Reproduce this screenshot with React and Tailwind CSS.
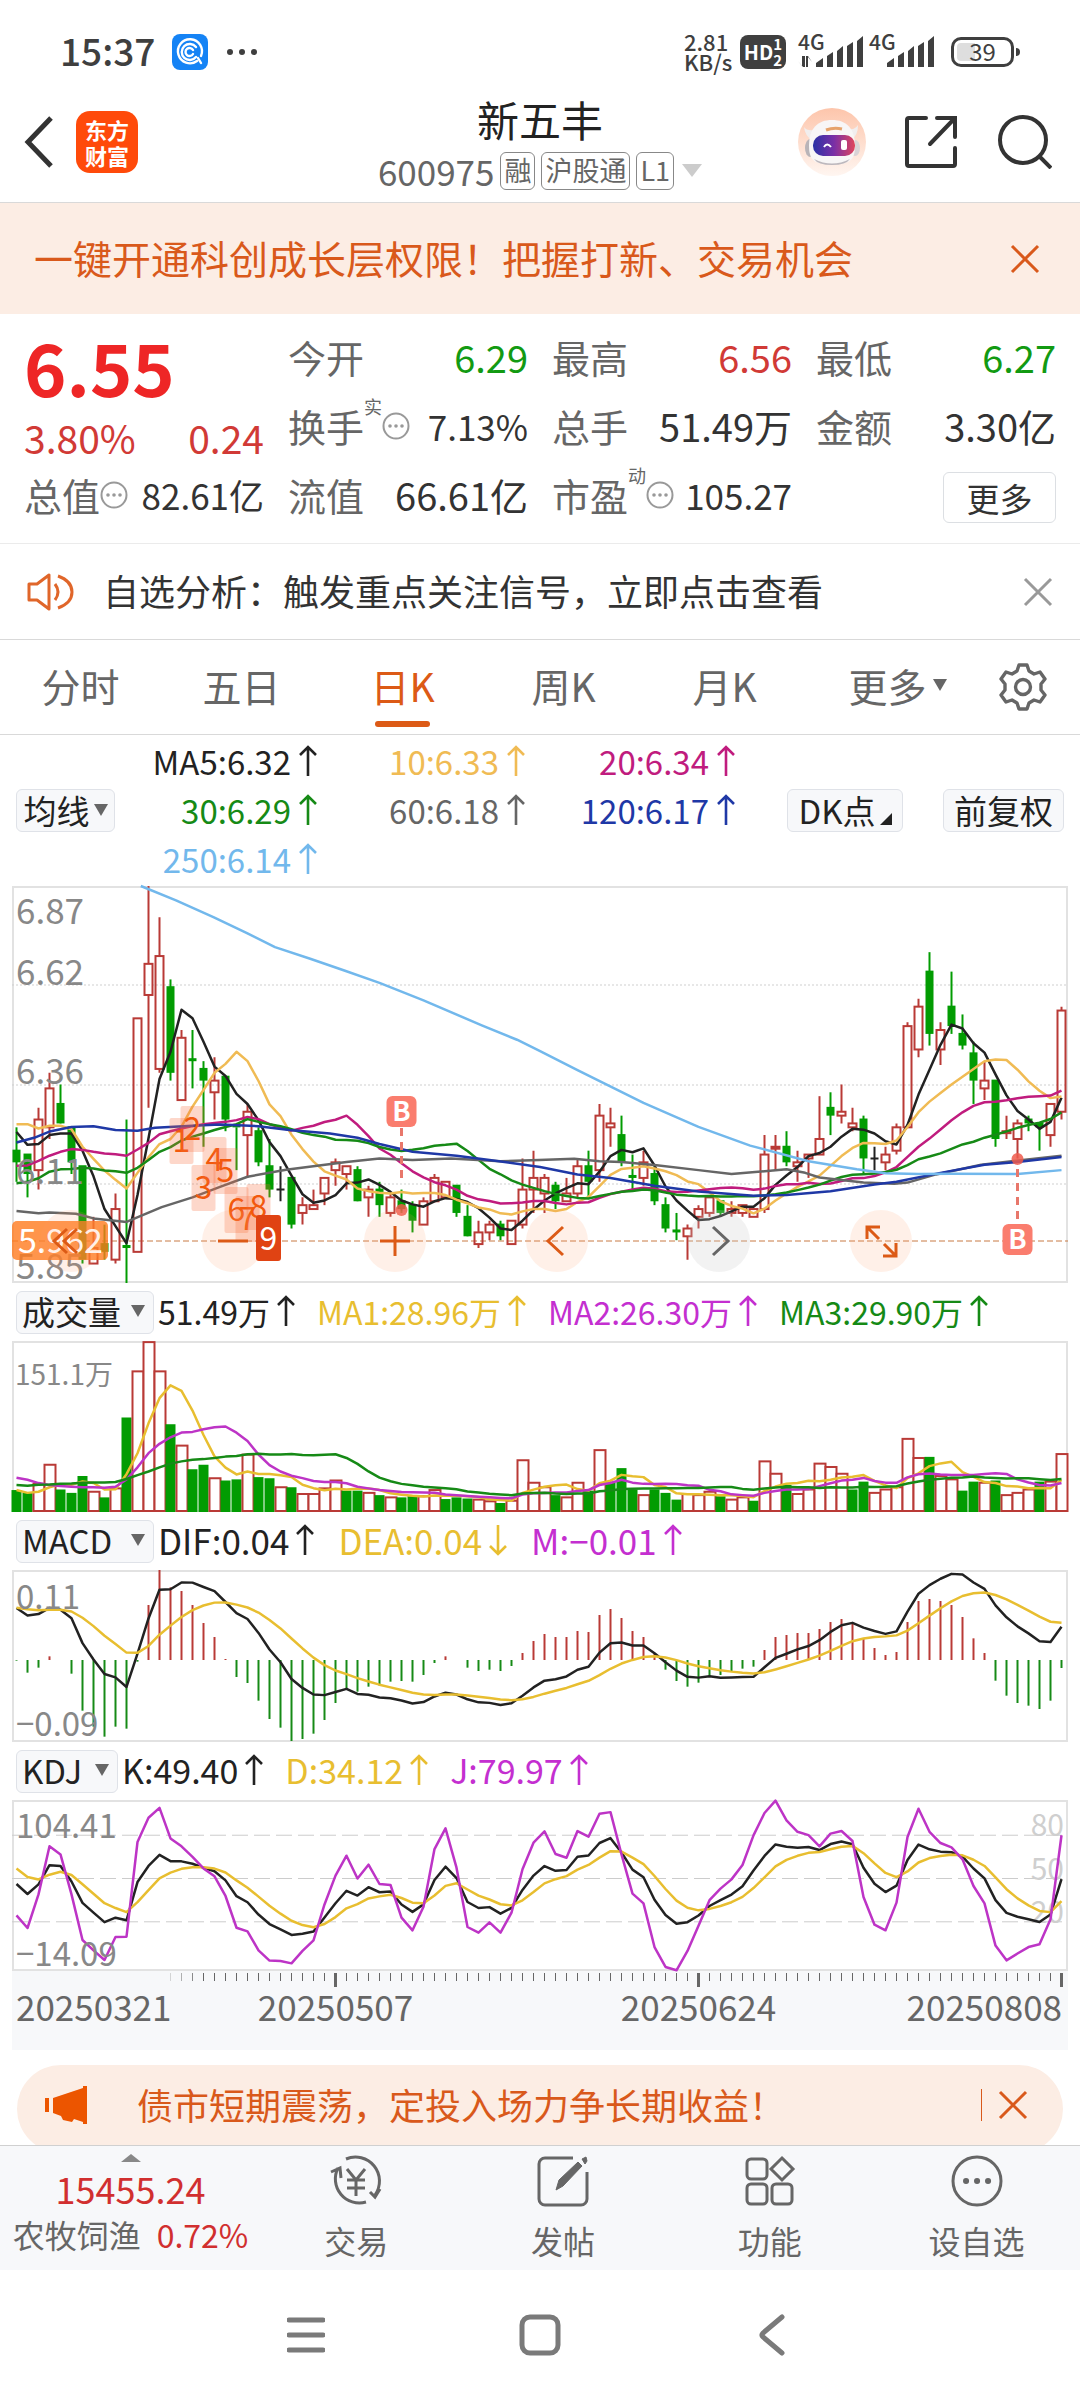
import React from 'react';

const RED = '#b93a36';
const GREEN = '#029c02';
const STEP = 11;
const WIDTH = 1056;

const xAt = (i) => 4.5 + STEP * i;

// open, close, high, low
const candles = [
  [6.19, 6.16, 6.25, 6.11], [6.18, 6.13, 6.18, 6.07], [6.14, 6.27, 6.3, 6.09], [6.25, 6.35, 6.39, 6.22],
  [6.31, 6.26, 6.36, 6.26], [6.25, 6.16, 6.25, 6.13], [6.15, 5.91, 6.15, 5.9], [5.9, 5.94, 6.02, 5.9],
  [5.95, 5.93, 6.0, 5.91], [5.91, 6.04, 6.08, 5.9], [5.945, 5.94, 6.27, 5.85], [5.93, 6.53, 6.53, 5.93],
  [6.59, 6.67, 6.87, 6.3], [6.4, 6.69, 6.79, 6.39], [6.61, 6.39, 6.63, 6.37], [6.32, 6.48, 6.5, 6.32],
  [6.425, 6.42, 6.5, 6.35], [6.4, 6.37, 6.42, 6.2], [6.34, 6.37, 6.43, 6.27], [6.38, 6.27, 6.38, 6.24],
  [6.255, 6.25, 6.25, 6.14], [6.23, 6.29, 6.31, 6.12], [6.24, 6.16, 6.25, 6.15], [6.15, 6.09, 6.22, 6.07],
  [6.09, 6.09, 6.15, 6.06], [6.12, 6.0, 6.12, 5.99], [6.03, 6.05, 6.07, 6.0], [6.04, 6.05, 6.09, 6.04],
  [6.08, 6.12, 6.12, 6.05], [6.14, 6.16, 6.17, 6.1], [6.13, 6.15, 6.15, 6.09], [6.14, 6.06, 6.15, 6.06],
  [6.07, 6.09, 6.1, 6.02], [6.09, 6.05, 6.11, 6.02], [6.03, 6.07, 6.08, 6.02], [6.06, 6.04, 6.09, 6.03],
  [6.05, 6.01, 6.06, 5.98], [6.0, 6.06, 6.07, 6.0], [6.06, 6.12, 6.13, 6.06], [6.07, 6.11, 6.11, 6.07],
  [6.1, 6.03, 6.1, 6.02], [6.02, 5.97, 6.05, 5.97], [5.95, 5.98, 6.01, 5.94], [5.98, 6.0, 6.01, 5.96],
  [6.0, 5.97, 6.01, 5.96], [5.95, 6.01, 6.01, 5.95], [6.0, 6.09, 6.17, 5.99], [6.09, 6.12, 6.19, 6.03],
  [6.08, 6.12, 6.13, 6.03], [6.1, 6.06, 6.11, 6.04], [6.06, 6.08, 6.12, 6.06], [6.08, 6.15, 6.17, 6.07],
  [6.15, 6.11, 6.19, 6.07], [6.14, 6.28, 6.31, 6.11], [6.25, 6.26, 6.3, 6.2], [6.23, 6.16, 6.28, 6.15],
  [6.125, 6.12, 6.18, 6.09], [6.12, 6.16, 6.19, 6.1], [6.13, 6.06, 6.15, 6.05], [6.05, 5.99, 6.07, 5.98],
  [5.985, 5.98, 6.03, 5.96], [5.97, 5.99, 6.0, 5.91], [6.02, 6.04, 6.05, 5.99], [6.03, 6.07, 6.07, 6.02],
  [6.06, 6.03, 6.06, 6.02], [6.03, 6.04, 6.06, 6.02], [6.03, 6.05, 6.05, 6.02], [6.02, 6.04, 6.04, 6.02],
  [6.04, 6.18, 6.23, 6.03], [6.195, 6.2, 6.23, 6.14], [6.2, 6.16, 6.24, 6.15], [6.15, 6.16, 6.19, 6.11],
  [6.17, 6.18, 6.18, 6.12], [6.18, 6.22, 6.33, 6.18], [6.3, 6.28, 6.34, 6.23], [6.28, 6.29, 6.36, 6.26],
  [6.25, 6.26, 6.3, 6.24], [6.27, 6.17, 6.28, 6.13], [6.17, 6.17, 6.2, 6.14], [6.16, 6.18, 6.2, 6.14],
  [6.19, 6.25, 6.26, 6.18], [6.25, 6.51, 6.52, 6.25], [6.45, 6.56, 6.58, 6.43], [6.65, 6.49, 6.7, 6.46],
  [6.45, 6.5, 6.52, 6.41], [6.56, 6.51, 6.65, 6.49], [6.49, 6.46, 6.54, 6.45], [6.44, 6.37, 6.47, 6.31],
  [6.35, 6.37, 6.42, 6.32], [6.37, 6.22, 6.37, 6.2], [6.235, 6.24, 6.28, 6.22], [6.22, 6.26, 6.27, 6.17],
  [6.27, 6.26, 6.28, 6.24], [6.26, 6.25, 6.26, 6.19], [6.23, 6.31, 6.31, 6.2], [6.29, 6.55, 6.56, 6.27],
];

const volumes = [
  19.5, 17, 25, 42, 20, 17, 32, 18, 13, 21, 84, 125, 151, 125, 78, 59, 38, 42, 30, 28, 29, 51, 31, 30,
  22, 22, 16, 16, 21, 28, 19, 19, 17, 15, 13, 13, 14, 14, 19.5, 11.5, 13, 12, 11, 9.5, 8, 10, 46, 26,
  22, 15, 13, 26, 19, 55, 26, 39, 20, 15, 20, 17, 11, 16, 15, 18, 14, 11, 13, 10, 45, 34, 24, 16,
  20, 43, 40, 34, 20, 27, 17, 20, 22, 65, 48, 49, 32, 29, 19, 27, 26, 28, 15, 17, 20, 27, 27, 51.5,
];

const macd = [
  -2, -38, -23, 11, 0, -41, -152, -200, -230, -200, -206, -5, 165, 270, 218, 207, 165, 111, 69, 3, -51, -69, -122, -177,
  -203, -243, -237, -221, -180, -129, -88, -95, -80, -77, -65, -63, -65, -45, -9, 11, 0, -23, -33, -29, -33, -18, 21, 57,
  78, 69, 69, 87, 84, 135, 153, 126, 87, 69, 18, -29, -63, -80, -68, -48, -45, -35, -26, -20, 30, 69, 75, 81,
  81, 93, 114, 123, 110, 65, 36, 15, 24, 114, 177, 183, 177, 165, 129, 65, 21, -62, -107, -129, -137, -147, -122, -24,
];

const kdjJ = [
  24.5, 15.7, 39, 72.3, 66.7, 39, 7.4, 0.2, -6.5, 9.5, 9.7, 75.3, 92.1, 99, 77.8, 72.3, 65, 57, 51.5, 37.9, 15.9, 13.4, 0.2, -6.9,
  -7.2, -8.8, -0.2, 7.2, 32, 52, 65.8, 50, 59.6, 46.2, 45.5, 22.9, 14.1, 30.5, 70.4, 84.8, 57.5, 16.4, 12.5, 19.6, 12.5, 26.3, 56.4, 74.8,
  82.7, 67, 64.4, 82.9, 79, 94.9, 96, 66.7, 39.5, 32.8, 2.5, -11.3, -13.6, -0.2, 17.3, 35, 43, 49.4, 59.4, 79.9, 95.4, 104, 90.3, 82.4,
  80.1, 72.3, 81.1, 82.9, 76, 37.2, 18, 14.1, 33.3, 78.8, 98.4, 82.4, 74.6, 71.6, 63.3, 44.8, 32.8, 3.5, -6.7, -2, 2.5, 4.4, 21.7, 79.97,
];

// moving average, the first values come from the days before the visible range
const average = (values, n, seed) =>
  values.map((_, i) => {
    if (i < seed.length) return seed[i];
    const part = values.slice(i - n + 1, i + 1);
    return part.reduce((a, b) => a + b, 0) / n;
  });

const closes = candles.map((c) => c[1]);

const ma5 = average(closes, 5, [6.238, 6.205, 6.207, 6.23]);
const ma10 = average(closes, 10, [6.258, 6.258, 6.247, 6.254, 6.254, 6.245, 6.2, 6.169, 6.139]);
const ma20 = average(closes, 20, [
  6.151, 6.152, 6.164, 6.177, 6.187, 6.194, 6.192, 6.187, 6.183, 6.181, 6.177, 6.193, 6.21, 6.232, 6.24, 6.247, 6.253, 6.258, 6.261,
]);
const ma30 = average(closes, 30, [
  6.106, 6.11, 6.119, 6.136, 6.142, 6.143, 6.146, 6.144, 6.139, 6.137, 6.133, 6.146, 6.166, 6.187, 6.199, 6.216, 6.226, 6.234,
  6.243, 6.251, 6.258, 6.271, 6.264, 6.258, 6.253, 6.245, 6.236, 6.23, 6.226,
]);

const ma60 = [
  [0, 6.035], [2, 6.029], [3, 6.031], [5.4, 6.028], [7, 6.016], [10, 6.007], [13.2, 6.045], [16, 6.07], [18.5, 6.097], [21, 6.123],
  [24.5, 6.141], [30, 6.161], [33, 6.17], [36, 6.166], [39.5, 6.17], [44, 6.163], [47.5, 6.166], [50.7, 6.169], [53, 6.163], [55, 6.161],
  [58, 6.153], [62, 6.14], [65, 6.13], [70, 6.142], [71.7, 6.133], [73, 6.121], [77, 6.108], [79.8, 6.105], [81, 6.108], [83.6, 6.129],
  [87.7, 6.154], [95, 6.177],
];
const ma120 = [
  [0, 6.211], [1.6, 6.223], [3, 6.239], [5, 6.251], [7, 6.253], [9, 6.243], [11, 6.241], [12.6, 6.249], [16, 6.254], [18.5, 6.257],
  [22, 6.253], [24.8, 6.243], [28.5, 6.234], [31, 6.223], [33, 6.207], [36, 6.187], [40, 6.177], [43, 6.166], [47.6, 6.148], [51, 6.129],
  [54, 6.12], [58, 6.1], [62, 6.085], [67, 6.074], [70, 6.076], [74, 6.086], [78, 6.103], [80, 6.11], [84, 6.133], [88, 6.154],
  [91.4, 6.162], [95, 6.174],
];
const ma250 = [
  [11.3, 6.87], [14.5, 6.833], [17.9, 6.79], [21, 6.748], [23.5, 6.713], [26.7, 6.683], [29.8, 6.653], [33, 6.621], [37, 6.576],
  [42.3, 6.512], [45.5, 6.475], [47.6, 6.446], [51, 6.397], [57, 6.313], [62, 6.251], [66.7, 6.203], [72, 6.163], [76.4, 6.142],
  [79, 6.132], [82, 6.13], [85, 6.131], [91, 6.13], [95, 6.14],
];

const volMa5 = average(volumes, 5, [19.5, 17, 18, 22]);
const volMa10 = average(volumes, 10, [30.5, 28.7, 25.7, 24, 23, 22.5, 22, 22, 21.6]);
const volMa20 = average(volumes, 20, [
  24, 23.4, 24.2, 24.5, 25.1, 25.4, 26, 26.3, 26.3, 26.6, 29.3, 32.8, 36, 39.6, 43, 45, 46.4, 47, 48,
]);

const dea = [];
macd.forEach((m, i) => dea.push(i === 0 ? 157 : dea[i - 1] + m / 8));
const dif = macd.map((m, i) => dea[i] + m / 2);

const kdjD = [];
kdjJ.forEach((j, i) => kdjD.push(i === 0 ? 57 : (6 * kdjD[i - 1] + j) / 7));
const kdjK = kdjJ.map((j, i) => (j + 2 * kdjD[i]) / 3);

const Line = ({ data, y, color, width = 2.5 }) => {
  const points = data.map((p, i) => (Array.isArray(p) ? `${xAt(p[0])},${y(p[1])}` : `${xAt(i)},${y(p)}`)).join(' ');
  return <polyline points={points} fill="none" stroke={color} strokeWidth={width} strokeLinejoin="round" />;
};

const Frame = ({ height }) => (
  <rect x="1" y="1" width={WIDTH - 2} height={height - 2} fill="none" stroke="#e2e2e2" strokeWidth="2" />
);

const priceY = (p) => ((6.87 - p) / 1.02) * 397;

const signals = [
  ['1', 15, 255], ['2', 16, 243], ['3', 17, 302], ['4', 18, 274], ['5', 19, 285], ['6', 20, 324], ['7', 21, 333], ['8', 22, 321],
];

const BuyMark = ({ i, boxY, dotY }) => {
  const x = xAt(i);
  const up = boxY < dotY;
  return (
    <g>
      <line
        x1={x} x2={x} y1={up ? boxY + 17 : dotY + 10} y2={up ? dotY - 28 : boxY - 16}
        stroke="#e8776b" strokeWidth="3" strokeDasharray="8 6"
      />
      <circle cx={x} cy={dotY} r="6" fill="#ee5a4c" fillOpacity="0.85" />
      <rect x={x - 15} y={boxY - 15} width="30" height="31" rx="6" fill="#fa7d6e" />
      <text x={x} y={boxY + 10} textAnchor="middle" fontSize="27" fontWeight="700" fill="#fff">B</text>
    </g>
  );
};

const PriceChart = () => (
  <svg viewBox="0 0 1056 397" className="block w-full overflow-visible">
    <Frame height={397} />
    {[99, 199, 298].map((y) => (
      <line key={y} x1="0" x2={WIDTH} y1={y} y2={y} stroke="#cfcfcf" strokeDasharray="2 2" />
    ))}
    <line x1="0" x2={WIDTH} y1="355" y2="355" stroke="#c87a45" strokeWidth="1" strokeDasharray="6 3" />
    {candles.map(([open, close, high, low], i) => {
      const x = xAt(i);
      const top = priceY(Math.max(open, close));
      const bottom = priceY(Math.min(open, close));
      if (open === close) {
        return <path key={i} d={`M${x} ${priceY(high)}V${priceY(low)}M${x - 4} ${top}h8`} stroke="#222" strokeWidth="2" />;
      }
      if (close > open) {
        return (
          <g key={i} stroke={RED} strokeWidth="2" fill="none">
            <path d={`M${x} ${priceY(high)}V${top}M${x} ${bottom}V${priceY(low)}`} />
            <rect x={x - 4} y={top} width="8" height={bottom - top} />
          </g>
        );
      }
      return (
        <g key={i}>
          <line x1={x} x2={x} y1={priceY(high)} y2={priceY(low)} stroke={GREEN} strokeWidth="2" />
          <rect x={x - 4} y={top - 1} width="8" height={Math.max(3, bottom - top + 1)} fill={GREEN} />
        </g>
      );
    })}
    <Line data={ma5} y={priceY} color="#222222" />
    <Line data={ma10} y={priceY} color="#f0bb54" />
    <Line data={ma20} y={priceY} color="#c01c7e" />
    <Line data={ma30} y={priceY} color="#168a16" />
    <Line data={ma60} y={priceY} color="#666666" />
    <Line data={ma120} y={priceY} color="#1f38a6" />
    <Line data={ma250} y={priceY} color="#72b8ec" />
    <g fill="#888" fontSize="35">
      <text x="4" y="38">6.87</text>
      <text x="4" y="99">6.62</text>
      <text x="4" y="198">6.36</text>
      <text x="4" y="298">6.11</text>
      <text x="4" y="393">5.85</text>
    </g>
    <rect x="0" y="335" width="96" height="39" rx="5" fill="#ff7a1e" fillOpacity="0.8" />
    <text x="6" y="367" fontSize="34" fill="#fff">5.962</text>
    {signals.map(([n, i, y]) => (
      <g key={n}>
        <rect x={xAt(i) - 12} y={y - 23} width="24" height="46" rx="2" fill="#f76a3c" fillOpacity="0.27" />
        <text x={xAt(i)} y={y + 11} textAnchor="middle" fontSize="32" fill="#f2590d">{n}</text>
      </g>
    ))}
    <BuyMark i={35} boxY={225} dotY={324} />
    <BuyMark i={91} boxY={353} dotY={273} />
  </svg>
);

const volY = (v) => 171 - (v / 151.1) * 170;

const VolumeChart = () => (
  <svg viewBox="0 0 1056 171" className="block w-full overflow-visible">
    <Frame height={171} />
    {volumes.map((v, i) => {
      const up = i > 0 && closes[i] >= closes[i - 1];
      return up ? (
        <rect key={i} x={xAt(i) - 5} y={volY(v)} width="11" height={170 - volY(v)} fill="#fff" stroke={RED} strokeWidth="2" />
      ) : (
        <rect key={i} x={xAt(i) - 5} y={volY(v)} width="10" height={171 - volY(v)} fill={GREEN} />
      );
    })}
    <Line data={volMa5} y={volY} color="#e8be30" />
    <Line data={volMa10} y={volY} color="#bd34c6" />
    <Line data={volMa20} y={volY} color="#168a16" />
    <text x="3" y="44" fontSize="28" fill="#888">151.1万</text>
  </svg>
);

const macdY = (v) => 90 - v / 3;

const MacdChart = () => (
  <svg viewBox="0 0 1056 172" className="block w-full overflow-visible">
    <Frame height={172} />
    {macd.map((m, i) => (
      <line key={i} x1={xAt(i)} x2={xAt(i)} y1="90" y2={macdY(m)} stroke={m > 0 ? RED : '#168a16'} strokeWidth="2" />
    ))}
    <Line data={dif} y={macdY} color="#222" />
    <Line data={dea} y={macdY} color="#e8be30" />
    <g fill="#888" fontSize="33">
      <text x="4" y="39">0.11</text>
      <text x="4" y="166">−0.09</text>
    </g>
  </svg>
);

const kdjY = (v) => (104.41 - v) * 1.443;

const KdjChart = () => (
  <svg viewBox="0 0 1056 171" className="block w-full overflow-visible">
    <Frame height={171} />
    {[80, 50, 20].map((v) => (
      <g key={v}>
        <line x1="0" x2={WIDTH} y1={kdjY(v)} y2={kdjY(v)} stroke="#cccccc" strokeWidth="1" strokeDasharray="16 6" />
        <text x="1052" y={kdjY(v) + 1} textAnchor="end" fontSize="30" fill="#cfcfcf">{v}</text>
      </g>
    ))}
    <Line data={kdjK} y={kdjY} color="#222" />
    <Line data={kdjD} y={kdjY} color="#e8be30" />
    <Line data={kdjJ} y={kdjY} color="#bd34c6" />
    <g fill="#888" fontSize="33">
      <text x="4" y="38">104.41</text>
      <text x="4" y="166">−14.09</text>
    </g>
  </svg>
);

const DateAxis = () => (
  <svg viewBox="0 0 1056 79" className="block w-full bg-[#f7f8fa]">
    {candles.map((_, i) => {
      if (i < 14) return null;
      const major = i === 29 || i === 62 || i === 95;
      return (
        <line
          key={i} x1={xAt(i)} x2={xAt(i)} y1="2" y2={major ? 16 : 10}
          stroke="#666" strokeWidth={major ? 3 : 1} strokeOpacity={i < 17 ? (i - 13) * 0.25 : 1}
        />
      );
    })}
    <g fill="#666" fontSize="35">
      <text x="4" y="50">20250321</text>
      <text x={xAt(29)} y="50" textAnchor="middle">20250507</text>
      <text x={xAt(62)} y="50" textAnchor="middle">20250624</text>
      <text x="1050" y="50" textAnchor="end">20250808</text>
    </g>
  </svg>
);

const Arrow = ({ down }) => (
  <svg viewBox="0 0 18 32" className={`w-[18px] h-8 shrink-0 ${down ? 'rotate-180' : ''}`}>
    <path d="M9 31V2M1 10l8-8 8 8" fill="none" stroke="currentColor" strokeWidth="2.6" />
  </svg>
);

const Caret = () => (
  <svg viewBox="0 0 14 12" className="w-[14px] h-3 shrink-0">
    <path d="M0 0h14L7 12z" fill="#666" />
  </svg>
);

const More = () => (
  <svg viewBox="0 0 28 28" className="w-7 h-7 shrink-0">
    <circle cx="14" cy="14" r="12.5" fill="none" stroke="#999" strokeWidth="2" />
    <circle cx="8" cy="14" r="1.8" fill="#999" />
    <circle cx="14" cy="14" r="1.8" fill="#999" />
    <circle cx="20" cy="14" r="1.8" fill="#999" />
  </svg>
);

const Close = ({ className = '' }) => (
  <svg viewBox="0 0 30 30" className={`w-[30px] h-[30px] shrink-0 ${className}`}>
    <path d="M2 2l26 26M28 2L2 28" fill="none" stroke="currentColor" strokeWidth="3" />
  </svg>
);

const Signal = ({ data }) => (
  <div className="w-[66px] h-9">
    <svg viewBox="0 0 66 36" className="w-full h-full overflow-visible" fill="#3f3f3f">
      <text x="0" y="16" fontSize="21" fontWeight="500">4G</text>
      {data && <path d="M0 27l4 5V22h3v11H5zM14 28l-4-5v10H8V22h2z" />}
      <path d="M18 33v-4l7-5v9zM29 33V22l6-4v15zM39 33V17l6-5v21zM49 33V12l6-4v25zM59 33V7l6-5v31z" />
    </svg>
  </div>
);

const StatusBar = () => (
  <div className="h-[95px] pt-2 pl-[60px] pr-[60px] flex items-center justify-between text-[#3f3f3f]">
    <div className="flex items-center">
      <span className="pb-1 text-[37px] leading-10 font-medium w-[112px]">15:37</span>
      <svg viewBox="0 0 36 36" className="w-9 h-9">
        <rect width="36" height="36" rx="8" fill="#1583f5" />
        <g fill="none" stroke="#fff" strokeWidth="2.4" strokeLinecap="round">
          <path d="M25 27a12 12 0 1 1 4-5M26 24l3 5" />
          <path d="M24 13a8 8 0 1 0 0 10" />
          <path d="M21 16a4 4 0 1 0 0 4" />
        </g>
      </svg>
      <svg viewBox="0 0 32 8" className="w-8 h-2 ml-[18px]" fill="#3f3f3f">
        <circle cx="4" cy="4" r="3" />
        <circle cx="16" cy="4" r="3" />
        <circle cx="28" cy="4" r="3" />
      </svg>
    </div>
    <div className="flex items-center">
      <div className="w-14 pb-[2px] text-[22px] leading-5 font-medium">
        <div>2.81</div>
        <div>KB/s</div>
      </div>
      <div className="w-[46px] h-[34px] rounded-lg bg-[#3f3f3f] text-white flex items-center justify-center">
        <span className="text-[20px] leading-6 font-bold">HD</span>
        <span className="text-[15px] leading-4 font-bold">
          <span className="block">1</span>
          <span className="block">2</span>
        </span>
      </div>
      <div className="flex gap-[5px] ml-3">
        <Signal data />
        <Signal />
      </div>
      <div className="ml-4 w-[63px] h-[30px] border-[3px] border-[#3f3f3f] rounded-[10px] p-[3px]">
        <div className="h-full flex items-center justify-center text-[24px] leading-5 rounded-sm bg-linear-to-r from-[#dedede] from-35% to-white to-35%">
          <span className="pb-[2px]">39</span>
        </div>
      </div>
      <div className="w-1 h-2 ml-[2px] rounded-r bg-[#3f3f3f]" />
    </div>
  </div>
);

const Robot = () => (
  <svg viewBox="0 0 68 68" className="w-[68px] h-[68px]">
    <defs>
      <linearGradient id="halo" x1="0" y1="0" x2="0" y2="1">
        <stop offset="0" stopColor="#fdc5ab" />
        <stop offset="1" stopColor="#fff6f1" />
      </linearGradient>
      <linearGradient id="visor" x1="0" y1="0" x2="1" y2="0">
        <stop offset="0" stopColor="#2a31a5" />
        <stop offset="0.5" stopColor="#7a2fa6" />
        <stop offset="1" stopColor="#e0455c" />
      </linearGradient>
    </defs>
    <circle cx="34" cy="34" r="34" fill="url(#halo)" />
    <path d="M6 19q3 4 9 3l3-3 6 6-10 7q-7-4-8-13zM60 17q-3 5-9 4l-3-2-4 6 10 6q6-4 6-14z" fill="#f1eeee" />
    <ellipse cx="12" cy="40" rx="5" ry="9" fill="#b9b4b8" />
    <ellipse cx="57" cy="40" rx="5" ry="8" fill="#d9d3d6" />
    <path d="M11 38C11 20 20 12 34 12s23 8 23 26-10 18-23 18-23 0-23-18z" fill="#f8f6f6" />
    <path d="M16 51q18 9 36 0-4 6-18 6t-18-6z" fill="#bdb8bd" />
    <rect x="15" y="27" width="42" height="21" rx="10" fill="url(#visor)" />
    <path d="M26 39q3-5 7 0" fill="none" stroke="#fff" strokeWidth="2" />
    <rect x="43" y="32" width="6" height="10" rx="2" fill="#fff" />
    <path d="M28 22q8-3 16-1" stroke="#e6a36c" strokeWidth="3" fill="none" />
  </svg>
);

const tag = 'h-[38px] px-[3px] border border-[#888] rounded-md text-[27px] leading-[34px]';

const Header = () => (
  <header className="h-[108px] pb-[14px] px-6 flex items-center border-b border-[#d9d9d9]">
    <div className="flex-1 flex items-center gap-[22px]">
      <button aria-label="返回">
        <svg viewBox="0 0 30 52" className="w-[30px] h-[52px]">
          <path d="M27 2L4 26l23 24" fill="none" stroke="#333" strokeWidth="5" />
        </svg>
      </button>
      <div className="w-[62px] h-[62px] rounded-[14px] bg-[#ff4a0a] text-white text-[22px] leading-[26px] font-bold flex flex-col items-center justify-center">
        <span>东方</span>
        <span>财富</span>
      </div>
    </div>
    <div className="text-center">
      <h1 className="pb-2 text-[42px] leading-[50px] text-[#222]">新五丰</h1>
      <button className="flex items-center gap-[6px] text-[#666]">
        <span className="text-[35px] leading-9">600975</span>
        <span className={tag}>融</span>
        <span className={tag}>沪股通</span>
        <span className={tag}>L1</span>
        <svg viewBox="0 0 20 13" className="w-5 h-[13px] ml-[2px]">
          <path d="M0 0h20L10 13z" fill="#ccc" />
        </svg>
      </button>
    </div>
    <div className="flex-1 flex items-center justify-end">
      <button aria-label="智能助手" className="mr-[38px]"><Robot /></button>
      <button aria-label="分享" className="mr-10">
        <svg viewBox="0 0 54 54" className="w-[54px] h-[54px]">
          <path
            d="M22 3H5a2 2 0 0 0-2 2v44a2 2 0 0 0 2 2h44a2 2 0 0 0 2-2V33M33 3h18v19M51 3L26 29"
            fill="none" stroke="#333" strokeWidth="4" strokeLinecap="round"
          />
        </svg>
      </button>
      <button aria-label="搜索" className="mr-1">
        <svg viewBox="0 0 54 54" className="w-[54px] h-[54px]">
          <circle cx="25" cy="25" r="23" fill="none" stroke="#333" strokeWidth="4" />
          <path d="M41 41l12 12" stroke="#333" strokeWidth="4" />
        </svg>
      </button>
    </div>
  </header>
);

const Quote = ({ label, value, color = 'text-[#333]', small, sup, more }) => (
  <div className="h-[69px] pb-[5px] flex items-center justify-between whitespace-nowrap">
    <span className="flex items-center text-[38px] leading-[44px] text-[#666]">
      {label}
      {sup && <sup className="self-start text-[18px] leading-5 top-0 -mt-2">{sup}</sup>}
      {more && <More />}
    </span>
    <span className={`${small ? 'text-[35px]' : 'text-[38px]'} leading-[44px] ${color}`}>{value}</span>
  </div>
);

const QuotePanel = () => (
  <section className="pt-[11px] pb-[11px] px-6 grid grid-cols-4 gap-x-6 border-b border-[#ebebeb]">
    <div className="row-span-2 flex flex-col">
      <div className="h-[90px] text-[72px] leading-[82px] font-bold text-[#ee2626]">6.55</div>
      <div className="h-[48px] flex justify-between text-[39px] leading-[44px] text-[#d13a36]">
        <span>3.80%</span>
        <span>0.24</span>
      </div>
    </div>
    <Quote label="今开" value="6.29" color="text-[#129a12]" />
    <Quote label="最高" value="6.56" color="text-[#d13a36]" />
    <Quote label="最低" value="6.27" color="text-[#129a12]" />
    <Quote label="换手" value="7.13%" small sup="实" more />
    <Quote label="总手" value="51.49万" />
    <Quote label="金额" value="3.30亿" />
    <Quote label="总值" value="82.61亿" small more />
    <Quote label="流值" value="66.61亿" />
    <Quote label="市盈" value="105.27" small sup="动" more />
    <div className="h-[69px] flex items-center justify-end">
      <button className="w-[113px] h-[51px] border border-[#dcdfe3] rounded-md text-[33px] leading-[46px] text-[#333]">更多</button>
    </div>
  </section>
);

const tabs = ['分时', '五日', '日K', '周K', '月K', '更多'];

const Tabs = () => (
  <nav className="h-[95px] flex items-stretch border-b border-[#d9d9d9]">
    <div className="flex-1 grid grid-cols-6">
      {tabs.map((tab) => {
        const active = tab === '日K';
        return (
          <button
            key={tab}
            className={`relative pb-1 flex items-center justify-center gap-[6px] text-[39px] ${tab === '更多' ? 'pl-6' : ''} ${active ? 'text-[#dc5a16]' : 'text-[#666]'}`}
          >
            {tab}
            {tab === '更多' && <Caret />}
            {active && <span className="absolute bottom-[7px] w-[55px] h-[6px] rounded-full bg-[#dc5a16]" />}
          </button>
        );
      })}
    </div>
    <button aria-label="设置" className="w-[114px] flex items-center justify-center">
      <svg viewBox="0 0 48 48" className="w-12 h-12" fill="none" stroke="#666" strokeWidth="3.4" strokeLinejoin="round">
        <path d="M20 2h8l2 6 5 3 6-2 5 7-4 5v6l4 5-5 7-6-2-5 3-2 6h-8l-2-6-5-3-6 2-5-7 4-5v-6l-4-5 5-7 6 2 5-3z" />
        <circle cx="24" cy="24" r="7.5" />
      </svg>
    </button>
  </nav>
);

const Ma = ({ text, color }) => (
  <span className={`flex items-center justify-end gap-2 h-[49px] pb-[2px] ${color}`}>
    {text}
    <Arrow />
  </span>
);

const boxButton = 'flex items-center border border-[#dfe2e8] rounded-md bg-[#f7f8fa] text-[#222]';

const Averages = () => (
  <div className="pt-[2px] pb-[2px] pl-4 pr-4 flex items-center text-[33px] leading-10 whitespace-nowrap">
    <button className={`${boxButton} h-[43px] w-[99px] pb-[2px] justify-center gap-1`}>
      均线
      <Caret />
    </button>
    <div className="grid grid-cols-[202px_208px_210px]">
      <Ma text="MA5:6.32" color="text-[#222222]" />
      <Ma text="10:6.33" color="text-[#f0bb54]" />
      <Ma text="20:6.34" color="text-[#c01c7e]" />
      <Ma text="30:6.29" color="text-[#168a16]" />
      <Ma text="60:6.18" color="text-[#666666]" />
      <Ma text="120:6.17" color="text-[#1f38a6]" />
      <Ma text="250:6.14" color="text-[#72b8ec]" />
    </div>
    <div className="flex-1 flex justify-end gap-10">
      <button className={`${boxButton} h-[43px] w-[116px] pb-[2px] justify-center gap-1`}>
        DK点
        <svg viewBox="0 0 12 12" className="w-3 h-3 self-end mb-1">
          <path d="M12 0v12H0z" fill="#222" />
        </svg>
      </button>
      <button className={`${boxButton} h-[43px] w-[121px] pb-[2px] justify-center`}>前复权</button>
    </div>
  </div>
);

const IndicatorRow = ({ name, width, size, values }) => (
  <div className="h-[58px] pl-1 flex items-center text-[33px] leading-10 whitespace-nowrap">
    <button className={`${boxButton} h-[43px] pb-[2px] pl-[5px] pr-2 justify-between ${width}`}>
      {name}
      <Caret />
    </button>
    <div className={`flex pb-[2px] pl-1 ${size}`}>
      {values.map(([text, color, down]) => (
        <span key={text} className={`flex items-center gap-[7px] ${color}`}>
          {text}
          <Arrow down={down} />
        </span>
      ))}
    </div>
  </div>
);

const roundButtons = [
  ['更早', 'M27 19L14 31l13 12M37 19L24 31l13 12', true],
  ['缩小', 'M16 31h30', true],
  ['放大', 'M16 31h30M31 16v30', true],
  ['左移', 'M37 17L22 31l15 14', true],
  ['右移', 'M25 17l15 14-15 14', false],
  ['全屏', 'M17 29V17h13M17 17l12 12M46 33v13H33M46 46L34 34', true],
];

const ChartControls = () => (
  <div className="absolute left-0 right-0 bottom-[11px] px-7 flex gap-[100px]">
    {roundButtons.map(([label, d, on]) => (
      <button
        key={label}
        aria-label={label}
        className={`w-[62px] h-[62px] shrink-0 rounded-full ${on ? 'bg-[#ff9a66]/15 text-[#dc5a16]' : 'bg-[#cccccc]/25 text-[#666]'}`}
      >
        <svg viewBox="0 0 62 62" className="w-full h-full">
          <path d={d} fill="none" stroke="currentColor" strokeWidth="3" />
        </svg>
      </button>
    ))}
    <span className="absolute left-[244px] bottom-[11px] w-[25px] h-[46px] rounded-[3px] bg-[#e04313] text-white text-[32px] leading-[43px] text-center">
      9
    </span>
  </div>
);

const navItems = [
  {
    label: '交易',
    icon: (
      <>
        <path d="M18 6a24 24 0 0 1 29 36M38 49A24 24 0 0 1 10 15M3 19l9-4 1 10M52 36l-5 8-5-5" />
        <path d="M19 16l9 11 9-11M28 27v16M19 27h18M19 35h18" />
      </>
    ),
  },
  {
    label: '发帖',
    icon: (
      <>
        <path d="M38 5H10a6 6 0 0 0-6 6v35a6 6 0 0 0 6 6h36a6 6 0 0 0 6-6V19" />
        <path d="M21 37l3-10L43 9l4 4-19 20zM47 6l4-2 1 4-2 3z" fill="#666" strokeWidth="1" />
      </>
    ),
  },
  {
    label: '功能',
    icon: (
      <>
        <rect x="5" y="6" width="20" height="20" rx="4" />
        <rect x="5" y="31" width="20" height="20" rx="4" />
        <rect x="30" y="31" width="20" height="20" rx="4" />
        <path d="M40 5l11 11-11 11-11-11z" />
      </>
    ),
  },
  {
    label: '设自选',
    icon: (
      <>
        <circle cx="28" cy="28" r="24" />
        <path d="M17 28h.1M28 28h.1M39 28h.1" strokeWidth="6" strokeLinecap="round" />
      </>
    ),
  },
];

const BottomNav = () => (
  <nav className="relative h-[125px] flex bg-[#f7f8fa] border-t border-[#d0d0d0] whitespace-nowrap">
    <button className="w-[253px] pl-2 flex flex-col items-center pt-2">
      <svg viewBox="0 0 20 8" className="w-5 h-2">
        <path d="M10 0l10 8H0z" fill="#888" />
      </svg>
      <span className="mt-1 text-[36px] leading-[44px] text-[#d12f2f]">15455.24</span>
      <span className="flex gap-4 text-[32px] leading-[48px] text-[#666]">
        农牧饲渔
        <span className="text-[#d12f2f]">0.72%</span>
      </span>
    </button>
    {navItems.map(({ label, icon }) => (
      <button key={label} className="flex-1 flex flex-col items-center pt-[7px]">
        <svg viewBox="0 0 56 56" className="w-14 h-14" fill="none" stroke="#666" strokeWidth="3">
          {icon}
        </svg>
        <span className="mt-[6px] text-[32px] leading-[50px] text-[#666]">{label}</span>
      </button>
    ))}
  </nav>
);

const SystemNav = () => (
  <div className="h-[130px] flex items-center justify-center gap-[194px]">
    <button aria-label="任务">
      <svg viewBox="0 0 38 40" className="w-[38px] h-10">
        <path d="M2 5h34M2 20h34M2 35h34" stroke="#7a7a7a" strokeWidth="5" strokeLinecap="round" />
      </svg>
    </button>
    <button aria-label="主屏幕">
      <svg viewBox="0 0 42 42" className="w-[42px] h-[42px]">
        <rect x="3" y="3" width="36" height="36" rx="8" fill="none" stroke="#7a7a7a" strokeWidth="5" />
      </svg>
    </button>
    <button aria-label="后退">
      <svg viewBox="0 0 38 42" className="w-[38px] h-[42px]">
        <path d="M27 3L8 19q-2 2 0 4l19 16" fill="none" stroke="#7a7a7a" strokeWidth="5" strokeLinecap="round" />
      </svg>
    </button>
  </div>
);

export default function App() {
  return (
    <div className="bg-white overflow-hidden font-['Noto_Sans_CJK_SC',sans-serif]">
      <StatusBar />
      <Header />

      <div className="h-[111px] pl-[34px] pr-10 flex items-center justify-between bg-[#fcede4] text-[#d9591b]">
        <a href="#" className="pb-1 text-[39px] leading-[50px]">一键开通科创成长层权限！把握打新、交易机会</a>
        <button aria-label="关闭"><Close /></button>
      </div>

      <QuotePanel />

      <div className="h-24 px-[27px] flex items-center border-b border-[#d9d9d9]">
        <svg viewBox="0 0 48 40" className="w-12 h-10" fill="none" stroke="#e0662a" strokeWidth="3">
          <path d="M2 12h8L22 3v34l-12-9H2z" strokeLinejoin="round" />
          <path d="M28 12q6 8 0 16M31 4q14 5 14 16T31 36" />
        </svg>
        <a href="#" className="pb-1 ml-7 flex-1 text-[36px] leading-[50px] text-[#333]">自选分析：触发重点关注信号，立即点击查看</a>
        <button aria-label="关闭"><Close className="text-[#999]" /></button>
      </div>

      <Tabs />
      <Averages />

      <main className="mx-3">
        <div className="relative">
          <PriceChart />
          <ChartControls />
        </div>
        <IndicatorRow
          name="成交量"
          width="w-[138px]"
          size="text-[32px] gap-[22px]"
          values={[
            ['51.49万', 'text-[#222]'],
            ['MA1:28.96万', 'text-[#e8be30]'],
            ['MA2:26.30万', 'text-[#c42fd0]'],
            ['MA3:29.90万', 'text-[#168a16]'],
          ]}
        />
        <VolumeChart />
        <IndicatorRow
          name="MACD"
          width="w-[138px]"
          size="text-[35px] gap-6"
          values={[
            ['DIF:0.04', 'text-[#222]'],
            ['DEA:0.04', 'text-[#e8be30]', true],
            ['M:−0.01', 'text-[#c42fd0]'],
          ]}
        />
        <MacdChart />
        <IndicatorRow
          name="KDJ"
          width="w-[102px]"
          size="text-[34px] gap-[22px]"
          values={[
            ['K:49.40', 'text-[#222]'],
            ['D:34.12', 'text-[#e8be30]'],
            ['J:79.97', 'text-[#c42fd0]'],
          ]}
        />
        <KdjChart />
        <DateAxis />
      </main>

      <div className="h-[95px] pt-[15px] px-[17px] overflow-hidden">
        <div className="h-[88px] pb-2 pl-7 pr-[35px] flex items-center rounded-[44px] bg-[#fcede4] text-[#d9591b]">
          <svg viewBox="0 0 42 38" className="w-[42px] h-[38px]" fill="#ec5500">
            <path d="M0 12h4v14H0zM8 12L38 2v-2h4v38h-4v-2l-9-3-2 3-9-2-2-4-8-3z" />
          </svg>
          <a href="#" className="pb-[2px] ml-[50px] flex-1 text-[36px] leading-[50px]">债市短期震荡，定投入场力争长期收益！</a>
          <span className="w-px h-8 mr-4 bg-[#d9591b]" />
          <button aria-label="关闭"><Close /></button>
        </div>
      </div>

      <BottomNav />
      <SystemNav />
    </div>
  );
}
